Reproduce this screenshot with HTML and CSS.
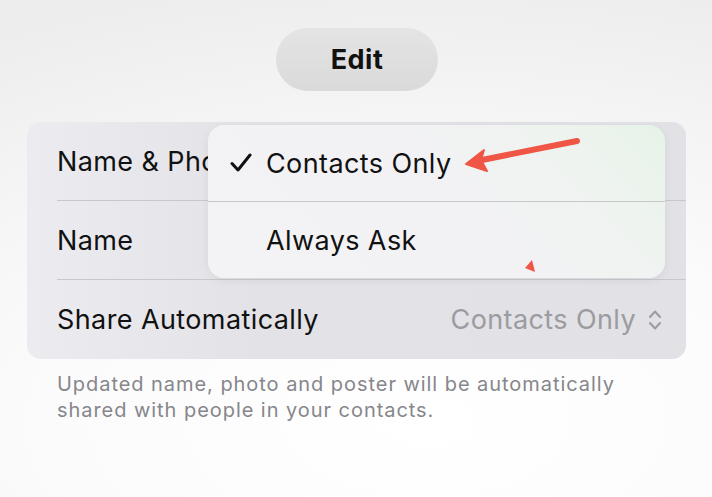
FILE: index.html
```html
<!DOCTYPE html>
<html lang="en">
<head>
  <meta charset="UTF-8">
  <meta name="viewport" content="width=device-width, initial-scale=1.0">
  <title>Edit Sharing</title>
  <link rel="stylesheet" href="styles.css">
</head>
<body>
  <div class="page">
    <div class="top">
      <button class="edit-btn">Edit</button>
    </div>

    <div class="card">
      <div class="row">Name &amp; Photo</div>
      <div class="row">Name</div>
      <div class="row row-last">
        <span>Share Automatically</span>
        <span class="value">Contacts Only
          <svg class="updown" width="14" height="24" viewBox="0 0 14 24">
            <path d="M2 9 L7 3.5 L12 9 M2 15 L7 20.5 L12 15" fill="none" stroke="#9a9aa0" stroke-width="2" stroke-linecap="round" stroke-linejoin="round"/>
          </svg>
        </span>
      </div>

      <!-- popup menu over the card -->
      <div class="menu">
        <div class="menu-item">
          <svg class="check" width="22" height="20" viewBox="0 0 22 20">
            <path d="M2 10.5 L8 17 L20 2" fill="none" stroke="#111" stroke-width="3" stroke-linecap="round" stroke-linejoin="round"/>
          </svg>
          <span>Contacts Only</span>
        </div>
        <div class="menu-item">
          <span>Always Ask</span>
        </div>
      </div>
    </div>

    <p class="note">Updated name, photo and poster will be automatically<br>shared with people in your contacts.</p>

    <svg class="annot" width="712" height="300" viewBox="0 0 712 300">
      <path d="M577 141 L482 160" stroke="#ef5646" stroke-width="6" stroke-linecap="round"/>
      <path d="M466 164 L484 150 L481 160 L487 171 Z" fill="#ef5646" stroke="#ef5646" stroke-width="2" stroke-linejoin="round"/>
      <path d="M525 268 L532 260 L535 272 Z" fill="#ef5646"/>
    </svg>
  </div>
</body>
</html>
```

FILE: styles.css
```css
body {
  margin: 0;
  font-family: Inter, "Noto Sans", sans-serif;
  color: #111;
}

.page {
  position: relative;
  width: 712px;
  height: 497px;
  overflow: hidden;
  background: radial-gradient(ellipse 120% 90% at 60% 85%, #ffffff 0%, #fbfbfb 45%, #ededed 100%);
}

.top {
  display: flex;
  justify-content: center;
  padding-top: 28px;
}

.edit-btn {
  width: 162px;
  height: 63px;
  margin-left: 2px;
  border: none;
  border-radius: 32px;
  background: linear-gradient(#e4e4e4, #dadada);
  font-family: Inter, sans-serif;
  font-size: 27px;
  font-weight: 700;
  letter-spacing: 0.5px;
  color: #111;
}

.card {
  position: relative;
  margin: 31px 26px 0 27px;
  border-radius: 14px;
  background: linear-gradient(90deg, #ececf0 0%, #e2e2e7 35%, #e1e1e6 100%);
}

.row {
  display: flex;
  align-items: center;
  justify-content: space-between;
  height: 78px;
  margin-left: 30px;
  padding-right: 24px;
  border-bottom: 1px solid #c8c8cc;
  font-size: 27px;
  letter-spacing: 0.4px;
}

.row-last {
  border-bottom: none;
  height: 79px;
}

.value {
  display: flex;
  align-items: center;
  gap: 12px;
  color: #9b9ba0;
}

.updown {
  display: block;
}

.menu {
  position: absolute;
  left: 181px;
  top: 3px;
  width: 457px;
  border-radius: 16px;
  background: linear-gradient(225deg, #e6f3e8 0%, #eff3f0 22%, #f2f2f4 45%, #f3f3f5 100%);
  box-shadow: 0 2px 10px rgba(0, 0, 0, 0.06);
  overflow: hidden;
}

.menu-item {
  display: flex;
  align-items: center;
  height: 76px;
  padding-left: 58px;
  position: relative;
  font-size: 27px;
  letter-spacing: 0.4px;
  color: #111;
}

.menu-item + .menu-item {
  border-top: 1px solid #c8c8cc;
}

.check {
  position: absolute;
  left: 22px;
  top: 28px;
}

.note {
  margin: 12px 20px 0 57px;
  font-size: 20px;
  line-height: 26px;
  letter-spacing: 0.95px;
  color: #86868b;
}

.annot {
  position: absolute;
  left: 0;
  top: 0;
  pointer-events: none;
}
```
